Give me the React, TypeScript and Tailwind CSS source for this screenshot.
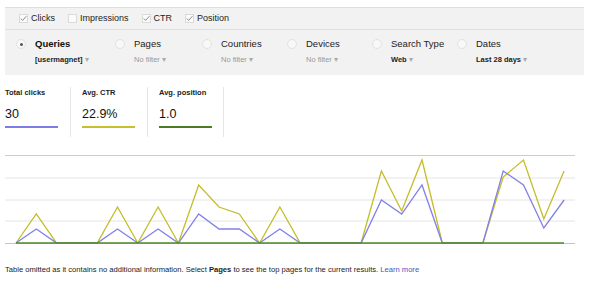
const font = { fontFamily: '"Liberation Sans", Arial, Helvetica, sans-serif' };

const xs = Array.from({ length: 28 }, (_, i) => 16 + i * 20.3);

const ctr = [244, 215, 244, 244, 244, 208, 244, 208, 244, 186, 208, 215, 244, 208, 244, 244, 244, 244, 172, 212, 161, 244, 244, 244, 178, 161, 220, 172];
const clicks = [244, 230, 244, 244, 244, 230, 244, 230, 244, 215, 230, 230, 244, 230, 244, 244, 244, 244, 201, 215, 186, 244, 244, 244, 172, 186, 229, 201];

// chart svg starts at page y = 150
const pts = (ys: number[]) => ys.map((y, i) => `${xs[i].toFixed(1)},${y - 150}`).join(" ");

function Check({ on }: { on: boolean }) {
  return (
    <svg width="9" height="9" viewBox="0 0 9 9" className="shrink-0">
      <rect x="0.5" y="0.5" width="8" height="8" fill="#fbfbfb" stroke="#dadada" />
      {on && <path d="M1.8 4.6 L3.6 6.4 L7.4 2.2" fill="none" stroke="#8a8a8a" strokeWidth="1" />}
    </svg>
  );
}

function Radio({ on }: { on?: boolean }) {
  return (
    <span className="flex h-[10px] w-[10px] shrink-0 items-center justify-center rounded-full border border-[#e2e2e2] bg-[#f8f8f8]">
      {on && <span className="h-[3px] w-[3px] rounded-full bg-[#555]" />}
    </span>
  );
}

function Dim({ label, sub, on, bold, w }: { label: string; sub: string; on?: boolean; bold?: boolean; w: string }) {
  return (
    <div className={`flex items-start gap-[9px] ${w}`}>
      <div className="mt-[8px]">
        <Radio on={on} />
      </div>
      <div className="flex flex-col">
        <span className={`text-[9.5px] leading-[26px] ${on ? "font-bold text-[#111]" : "text-[#222]"}`}>{label}</span>
        <span className={`-mt-[2px] text-[7.5px] leading-[10px] ${bold ? "font-bold text-[#222]" : "text-[#999]"}`}>
          {sub} <span className="text-[#aaa] font-normal">▾</span>
        </span>
      </div>
    </div>
  );
}

export default function App() {
  return (
    <div className="h-[291px] w-[603px] overflow-hidden bg-white" style={font}>
      <div className="ml-[5px] mt-[7px] w-[579px] bg-[#f2f2f2]">
        <div className="flex h-[23px] items-center gap-[13px] border-t border-b border-[#dfdfdf] pl-[14px] text-[9px] text-[#222]">
          <label className="flex items-center gap-[3px]"><Check on /> Clicks</label>
          <label className="flex items-center gap-[3px]"><Check on={false} /> Impressions</label>
          <label className="flex items-center gap-[3px]"><Check on /> CTR</label>
          <label className="flex items-center gap-[3px]"><Check on /> Position</label>
        </div>
        <div className="flex h-[45px] items-start pl-[11px] pt-[1px]">
          <Dim label="Queries" sub="[usermagnet]" on bold w="w-[99px]" />
          <Dim label="Pages" sub="No filter" w="w-[87px]" />
          <Dim label="Countries" sub="No filter" w="w-[85px]" />
          <Dim label="Devices" sub="No filter" w="w-[85px]" />
          <Dim label="Search Type" sub="Web" bold w="w-[85px]" />
          <Dim label="Dates" sub="Last 28 days" bold w="w-[100px]" />
        </div>
      </div>

      <div className="ml-[5px] mt-[12px] flex h-[50px]">
        <div className="flex w-[65px] flex-col">
          <span className="mt-[1px] text-[7.5px] font-bold leading-[10px] text-[#222]">Total clicks</span>
          <span className="mt-[8px] text-[12.5px] leading-[16px] text-[#111]">30</span>
          <span className="mt-[4px] h-[2px] w-[53px] bg-[#7c7ce4]" />
        </div>
        <div className="flex w-[77px] flex-col border-l border-[#e6e6e6] pl-[11px]">
          <span className="mt-[1px] text-[7.5px] font-bold leading-[10px] text-[#222]">Avg. CTR</span>
          <span className="mt-[8px] text-[12.5px] leading-[16px] text-[#111]">22.9%</span>
          <span className="mt-[4px] h-[2px] w-[53px] bg-[#c7c02c]" />
        </div>
        <div className="flex w-[76px] flex-col border-l border-[#e6e6e6] pl-[11px]">
          <span className="mt-[1px] text-[7.5px] font-bold leading-[10px] text-[#222]">Avg. position</span>
          <span className="mt-[8px] text-[12.5px] leading-[16px] text-[#111]">1.0</span>
          <span className="mt-[4px] h-[2px] w-[53px] bg-[#4c7a22]" />
        </div>
        <div className="border-l border-[#e6e6e6]" />
      </div>

      <svg width="603" height="100" className="mt-[12px] block">
        <line x1="5" x2="575" y1="6.5" y2="6.5" stroke="#cdcdcd" />
        <line x1="5" x2="575" y1="29" y2="29" stroke="#e4e4e4" />
        <line x1="5" x2="575" y1="51" y2="51" stroke="#e4e4e4" />
        <line x1="5" x2="575" y1="72" y2="72" stroke="#e4e4e4" />
        <line x1="5" x2="575" y1="94.5" y2="94.5" stroke="#c4c4c4" />
        <polyline points={pts(ctr)} fill="none" stroke="#c4bd2a" strokeWidth="1.3" strokeLinejoin="miter" />
        <polyline points={pts(clicks)} fill="none" stroke="#8181e6" strokeWidth="1.3" />
        <line x1="16" x2="564" y1="94" y2="94" stroke="#4f8a25" strokeWidth="1.4" />
      </svg>

      <p className="ml-[5px] mt-[15px] text-[7.6px] leading-[12px] text-[#222]">
        Table omitted as it contains no additional information. Select <b>Pages</b> to see the top pages for the current
        results. <span className="text-[#4a54c0]">Learn more</span>
      </p>
    </div>
  );
}
